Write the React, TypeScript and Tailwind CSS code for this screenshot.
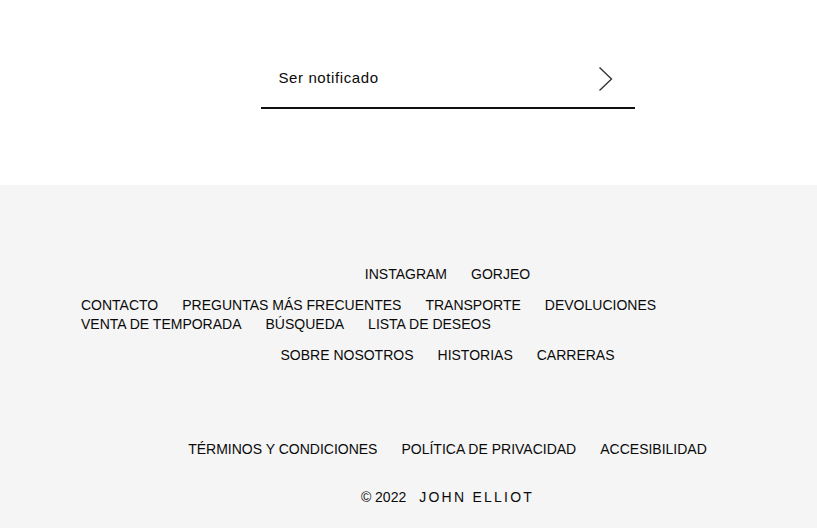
const SOCIAL = ["INSTAGRAM", "GORJEO"];

const SHOP = [
  "CONTACTO",
  "PREGUNTAS MÁS FRECUENTES",
  "TRANSPORTE",
  "DEVOLUCIONES",
  "VENTA DE TEMPORADA",
  "BÚSQUEDA",
  "LISTA DE DESEOS",
];

const ABOUT = ["SOBRE NOSOTROS", "HISTORIAS", "CARRERAS"];

const LEGAL = ["TÉRMINOS Y CONDICIONES", "POLÍTICA DE PRIVACIDAD", "ACCESIBILIDAD"];

function LinkRow({ items, className }: { items: string[]; className: string }) {
  return (
    <ul className={"flex flex-wrap gap-x-6 text-[14px] leading-[19px] " + className}>
      {items.map((item) => (
        <li key={item}>
          <a href="#" className="text-[#0a0a0a]">
            {item}
          </a>
        </li>
      ))}
    </ul>
  );
}

export default function App() {
  return (
    <div
      className="min-h-[528px] w-full bg-white"
      style={{ fontFamily: '"Liberation Sans", Arial, sans-serif' }}
    >
      <section className="h-[185px] pl-[81px] pr-[3px] pt-[50px]">
        <form className="mx-auto flex h-[59px] w-[374px] items-center justify-between border-b-2 border-[#111] pl-[18px] pr-[21px]">
          <span className="text-[15px] tracking-[0.04em] text-[#0a0a0a]">Ser notificado</span>
          <button type="button" className="flex items-center">
            <svg width="16" height="26" viewBox="0 0 16 26" fill="none">
              <path d="M1.5 1.5 L13.5 13 L1.5 24.5" stroke="#333" strokeWidth="1.4" />
            </svg>
          </button>
        </form>
      </section>

      <footer className="h-[343px] bg-[#f5f5f5] pl-[81px] pr-[3px] pt-[80px]">
        <nav className="flex flex-col gap-y-3">
          <LinkRow items={SOCIAL} className="justify-center" />
          <LinkRow items={SHOP} className="justify-start" />
          <LinkRow items={ABOUT} className="justify-center" />
        </nav>
        <LinkRow items={LEGAL} className="mt-[75px] justify-center" />
        <p className="mt-[29px] flex justify-center gap-[13px] text-[14px] leading-[19px] text-[#0a0a0a]">
          <span>© 2022</span>
          <span className="tracking-[0.16em]">JOHN ELLIOT</span>
        </p>
      </footer>
    </div>
  );
}
